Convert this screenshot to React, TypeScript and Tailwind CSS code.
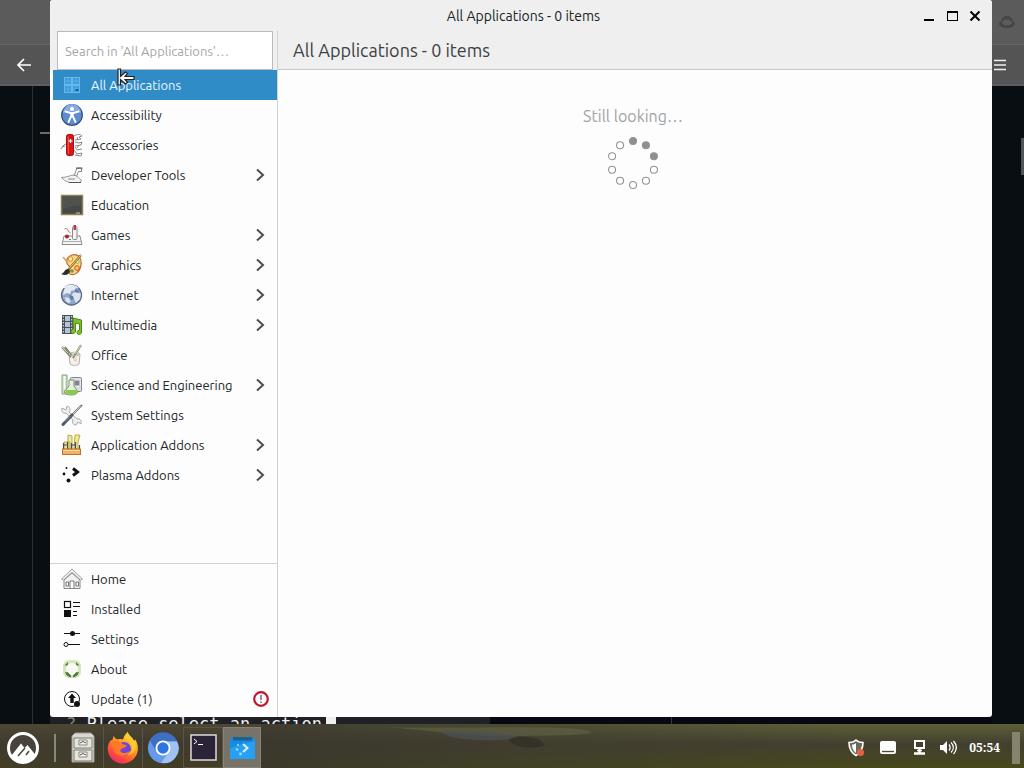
import type { ReactNode } from "react";

type Item = { label: string; icon: ReactNode; more?: boolean; alert?: boolean };

function Icon({ children }: { children: ReactNode }) {
  return (
    <svg viewBox="0 0 24 24" className="size-6 shrink-0" fill="none" aria-hidden="true">
      {children}
    </svg>
  );
}

const categories: Item[] = [
  {
    label: "All Applications",
    icon: (
      <Icon>
        <g stroke="#63b8ee" fill="#3f9cd8">
          <rect x="4.500" y="4.500" width="7" height="7" />
          <rect x="12.500" y="4.500" width="7" height="7" />
          <rect x="4.500" y="12.500" width="7" height="7" />
          <rect x="12.500" y="12.500" width="7" height="7" />
          <path d="M4 8h16M4 16h16M8 4v16M16 4v16" opacity=".6" />
        </g>
        <path d="M15.500 17h3" stroke="#175f92" strokeWidth="2" />
      </Icon>
    ),
  },
  {
    label: "Accessibility",
    icon: (
      <Icon>
        <circle cx="12" cy="12" r="10.300" fill="#5f8cce" stroke="#34547f" strokeWidth="1.300" />
        <path d="M3 10a9 9 0 0 1 18 0c-5-2-13-2-18 0z" fill="#86abe0" />
        <circle cx="12" cy="6" r="2" fill="#fff" />
        <path d="M5.500 8.500l5 1.500h3l5-1.500" stroke="#fff" strokeWidth="1.900" strokeLinecap="round" />
        <path d="M10.300 9.500h3.400v5h-3.400z" fill="#fff" />
        <path d="M11 13.500L8.500 19M13 13.500l2.500 5.500" stroke="#fff" strokeWidth="1.900" strokeLinecap="round" />
      </Icon>
    ),
  },
  {
    label: "Accessories",
    icon: (
      <Icon>
        <path d="M6 11c-3 1-4 3-5 5M5 13l-3 1M14 3c3-2 7-2 8 0l-3 1 2 2-6 1M15 9l4 1 3-1-1 3-6 1M15 14l2 3 5-1M14 17l3 4 5-1-1 3-6-1M17 4l1 3M19 12l-2 3" stroke="#8a8a8a" strokeWidth="1" />
        <rect x="6.500" y="1.500" width="7" height="21" rx="2" fill="#dc1515" stroke="#a80c0c" />
        <path d="M8.300 3.500v17" stroke="#f25252" strokeWidth="1.200" />
        <path d="M10.500 6v4M8.500 8h4" stroke="#fff" strokeWidth="1.200" />
      </Icon>
    ),
  },
  {
    label: "Developer Tools",
    icon: (
      <Icon>
        <path d="M1.500 14.500c5 0 8-2 12-2.500 4 0 5 4 8 5l-1 2.500h-11c-4-1-6-3-8-5z" fill="#f3f3f3" stroke="#999" />
        <path d="M14 13l3-8h4.500v3.500H18.500l-2 5M8 16h7" stroke="#888" />
        <path d="M16 4.500h6.500v1.500H16z" fill="#777" />
        <path d="M9 19.500h12" stroke="#555" />
      </Icon>
    ),
  },
  {
    label: "Education",
    icon: (
      <Icon>
        <rect x="1.500" y="2.500" width="21" height="19" fill="#474846" stroke="#8e8052" strokeWidth="1.500" />
        <path d="M3 4h18v9C13 11 9 15 3 16z" fill="#50524f" />
        <path d="M16 20h4" stroke="#cfc498" strokeWidth="1.200" />
      </Icon>
    ),
  },
  {
    label: "Games",
    icon: (
      <Icon>
        <path d="M4 13h16l2 8.500H2z" fill="#f5f5f3" stroke="#8a8a8a" />
        <path d="M2.500 18.500h19" stroke="#aaa" />
        <rect x="12.500" y="3.500" width="4.500" height="13" rx="1" fill="#f4f4f4" stroke="#8a8a8a" />
        <path d="M13.500 2h2.500v5h-2.500z" fill="#b53c4a" />
        <path d="M4.500 6c4-2 3 3 6 4" stroke="#b56a6a" />
        <circle cx="7" cy="13.500" r="2" fill="#a72335" />
        <path d="M9 16.500h2" stroke="#777" />
      </Icon>
    ),
  },
  {
    label: "Graphics",
    icon: (
      <Icon>
        <path d="M12 2c6-2 10 3 9 10-1 7-6 11-11 9-3-2 2-6-1-8-4-3-3-9 3-11z" fill="#f4d884" stroke="#c0672a" strokeWidth="1.200" />
        <circle cx="10.500" cy="6" r="2.300" fill="#fff2b6" stroke="#e58121" />
        <circle cx="17.500" cy="8.500" r="1.800" fill="#f7f3a0" stroke="#a4b53a" />
        <circle cx="17" cy="15" r="2.300" fill="#f5d25d" stroke="#db462b" />
        <circle cx="12" cy="18" r="1.800" fill="#76933a" />
        <path d="M21 2L8 17" stroke="#8c5c2c" strokeWidth="2" />
        <path d="M21 2L9 15.500" stroke="#f8ca89" />
        <path d="M8 16c-4 0-3 4-7 5 4 2 8 1 9-3z" fill="#2d2d2d" />
        <path d="M3 4l5 6" stroke="#d9a065" strokeWidth="1.500" />
      </Icon>
    ),
  },
  {
    label: "Internet",
    icon: (
      <Icon>
        <circle cx="11.500" cy="12" r="10" fill="#8fa6ca" stroke="#56698a" strokeWidth="1.300" />
        <path d="M4 7c3-5 8-6 12-3l-1 3-4 1-1 3-3-1-4 2z" fill="#e4eaf3" />
        <path d="M13 10l4-1 4 2-1 5-4 4-2-4-3-2zM5 14l4 1 2 4-3 1c-2-1-3-3-3-6z" fill="#dce4ee" />
        <path d="M9 12l4 1 1 3-3 1zM15 6l3 1 1 3-4-1z" fill="#5e7ba6" />
        <path d="M4 5c3-3 10-4 14 0" stroke="#f6f9fc" strokeWidth="1.200" />
      </Icon>
    ),
  },
  {
    label: "Multimedia",
    icon: (
      <Icon>
        <path d="M2 2h11v19H2z" fill="#45505c" />
        <path d="M5 3h5v5H5zM5 9h5v5H5zM5 15h5v5H5z" fill="#b4c4d4" />
        <path d="M3.300 3v17M11.700 3v17" stroke="#e8ecef" strokeDasharray="1.500 1.500" />
        <path d="M13 5l8.500 2v13c-2 3-6 1-4-2l2-1V11l-4-1v9c-2 3-6 1-4-2l2-1z" fill="#7cc12c" stroke="#4c8a14" />
      </Icon>
    ),
  },
  {
    label: "Office",
    icon: (
      <Icon>
        <path d="M9 11h11l-1 10c-3 2-6 2-9 0z" fill="#f4f2ec" stroke="#b5b0a4" />
        <path d="M2 4l9 10M5 4l7 9M21 2l-8 13" stroke="#7c8a68" strokeWidth="2" />
        <path d="M2 4l6 6M21 2l-6 9" stroke="#ded5a5" strokeWidth="1" />
        <ellipse cx="14.500" cy="11" rx="5.500" ry="1.800" stroke="#bbb" />
        <path d="M13 15l2 3M16 14v5" stroke="#e6b9a8" />
      </Icon>
    ),
  },
  {
    label: "Science and Engineering",
    icon: (
      <Icon>
        <path d="M2 2h5v19H2z" fill="#cfe3ca" stroke="#86a37c" />
        <rect x="10.500" y="4.500" width="11" height="14" rx="1" fill="#dcdce0" stroke="#858894" />
        <rect x="14" y="7" width="6" height="6" fill="#85809c" stroke="#eee" />
        <path d="M9 7h5v6l4 6c-2 4-12 4-14 0l5-6z" fill="#e4f2dc" stroke="#78966c" />
        <path d="M6.500 17h9.500l2 2.500c-3 3-9 3-13 0z" fill="#8bc94a" />
        <path d="M4.500 3v13" stroke="#fff" strokeWidth="1.500" />
      </Icon>
    ),
  },
  {
    label: "System Settings",
    icon: (
      <Icon>
        <path d="M2 5l4 2 1-4c3 1 4 4 2 6l8 7c3-1 5 2 4 5l-3-2-2 3c-3 0-4-2-3-5L6 10C3 11 1 8 2 5z" fill="#efefef" stroke="#aaa" />
        <path d="M22 2L10 14" stroke="#777" strokeWidth="2" />
        <path d="M21 3l-10 10" stroke="#ddd" strokeWidth=".8" />
        <path d="M12 12L3 21.500" stroke="#4f5a64" strokeWidth="3" strokeLinecap="round" />
        <path d="M10 13.500l-5 5" stroke="#93a0ad" />
      </Icon>
    ),
  },
  {
    label: "Application Addons",
    icon: (
      <Icon>
        <path d="M4 9h6v7H4zM8 2l4 1v13H8zM15 2h5l-2 7v7h-4z" fill="#f0ea9a" stroke="#b5ab45" />
        <path d="M3.500 10v6M7.500 9v7M11.500 10v6M15.500 9v7M19.500 12v4" stroke="#51465e" strokeWidth="1.200" />
        <path d="M4 12h4M11 12h4" stroke="#51465e" />
        <rect x="2.500" y="16" width="18" height="5.500" fill="#f0b266" stroke="#bd7427" />
        <path d="M3.500 17.500h16" stroke="#ffd9a0" />
      </Icon>
    ),
  },
  {
    label: "Plasma Addons",
    icon: (
      <Icon>
        <path d="M13 5.500l4.500 3.500-4.500 3.500" stroke="#111" strokeWidth="3" />
        <circle cx="6.500" cy="5" r="1" fill="#111" />
        <circle cx="4" cy="11" r="1.400" fill="#111" />
        <circle cx="8.500" cy="17.500" r="2" fill="#111" />
      </Icon>
    ),
  },
];

const actions: Item[] = [
  {
    label: "Home",
    icon: (
      <Icon>
        <path d="M1.500 12L12 2l10.500 10-2 1L12 5.500 3.500 13z" fill="#eee" stroke="#a0a0a0" />
        <path d="M4 13v8.500h16V13l-8-7z" fill="#f1f1f1" stroke="#888" />
        <path d="M10 21v-7h4v7M6 15h2.500v4H6zM16 15h2.500v4H16z" fill="#fff" stroke="#777" />
      </Icon>
    ),
  },
  {
    label: "Installed",
    icon: (
      <Icon>
        <rect x="4.500" y="4.500" width="6" height="6" stroke="#111" strokeWidth="1.200" />
        <path d="M4 13h7v7H4z" fill="#111" />
        <path d="M13 5.500h7M13 9.500h7M13 14.500h4M13 18.500h4" stroke="#111" />
      </Icon>
    ),
  },
  {
    label: "Settings",
    icon: (
      <Icon>
        <path d="M4 6.500h16M8 17.500h12" stroke="#111" strokeWidth="1.200" />
        <circle cx="12.500" cy="6.500" r="2.500" fill="#111" />
        <circle cx="6" cy="17.500" r="2" stroke="#111" />
      </Icon>
    ),
  },
  {
    label: "About",
    icon: (
      <Icon>
        <rect x="3" y="3" width="18" height="18" rx="6" fill="#d5e6ba" />
        <circle cx="12" cy="12" r="6" fill="#f8fbf4" />
        <path d="M4.500 8.500L8 5v2.500L7 8.500zM19.500 8.500L16 5v2.500l1 1zM5 15.500l2.500-.5 3.500 3.500v2C8 20 6 18 5 15.500zM19 15.500l-2.500-.5-3.500 3.500v2c3-.5 5-2.500 6-5z" fill="#4f7740" />
      </Icon>
    ),
  },
  {
    label: "Update (1)",
    icon: (
      <Icon>
        <circle cx="12" cy="12" r="7.500" stroke="#111" />
        <path d="M12 6.500l4 4.500h-2.300v5h-3.400v-5H8z" fill="#111" />
        <circle cx="17" cy="17" r="3" fill="#111" />
      </Icon>
    ),
    alert: true,
  },
];

function Row({ item, active }: { item: Item; active?: boolean }) {
  return (
    <li>
      <button
        type="button"
        className={
          active
            ? "flex h-[30px] w-full items-center gap-[7px] bg-[#308cc6] pl-[7px] pr-2 text-left text-[#eef7fd]"
            : "flex h-[30px] w-full items-center gap-[7px] pl-[7px] pr-2 text-left text-[#232629]"
        }
      >
        {item.icon}
        <span className="flex-1 whitespace-nowrap">{item.label}</span>
        {item.more && (
          <svg viewBox="0 0 18 18" className="size-[18px]" fill="none" aria-hidden="true">
            <path d="M6 3.500L12 9l-6 5.500" stroke="#4b4d4f" strokeWidth="2" />
          </svg>
        )}
        {item.alert && (
          <svg viewBox="0 0 16 16" className="size-4" fill="none" aria-hidden="true">
            <circle cx="8" cy="8" r="6.800" stroke="#c01530" strokeWidth="2.200" />
            <path d="M8 4v5M8 10.500v1.500" stroke="#666" strokeWidth="1.400" />
          </svg>
        )}
      </button>
    </li>
  );
}

const expandable = ["Developer Tools", "Games", "Graphics", "Internet", "Multimedia", "Science and Engineering", "Application Addons", "Plasma Addons"];

const dots = Array.from({ length: 10 }, (_, i) => {
  const a = (i * Math.PI) / 5;
  return { x: 27 + 22 * Math.sin(a), y: 27 - 22 * Math.cos(a), on: i < 3 };
});

function AppWindow() {
  return (
    <main className="absolute top-0 right-8 bottom-[51px] left-[50px] flex flex-col overflow-hidden rounded-[3px] bg-[#fdfdfd]">
      <header className="flex h-[31px] shrink-0 items-center gap-px bg-[#efefef] pr-[6px] text-[#202224]">
        <h1 className="flex-1 pl-20 text-center text-sm leading-5">All Applications - 0 items</h1>
        <button type="button" aria-label="Minimize" className="p-1">
          <svg viewBox="0 0 14 14" className="size-3.5" aria-hidden="true"><path d="M2 10h10v2H2z" fill="#000" /></svg>
        </button>
        <button type="button" aria-label="Maximize" className="p-1">
          <svg viewBox="0 0 14 14" className="size-3.5" aria-hidden="true"><path d="M2 2h11v10H2zM3 4v7h9V4z" fill="#000" fillRule="evenodd" /></svg>
        </button>
        <button type="button" aria-label="Close" className="p-1">
          <svg viewBox="0 0 14 14" className="size-3.5" aria-hidden="true"><path d="M2.500 2.500l9 9M11.500 2.500l-9 9" stroke="#000" strokeWidth="2" /></svg>
        </button>
      </header>
      <div className="flex min-h-0 flex-1">
        <aside className="flex w-[228px] shrink-0 flex-col border-r border-[#d0d1d2] text-[13px] leading-5">
          <div className="bg-[#efefef] pr-1 pl-[7px]">
            <input
              type="search"
              aria-label="Search in All Applications"
              placeholder="Search in 'All Applications'…"
              className="block h-[39px] w-full border border-[#b8babc] bg-white px-[7px] text-[13px] outline-none placeholder:text-[#a4a6a8]"
            />
          </div>
          <nav aria-label="Categories" className="flex-1 pl-[3px]">
            <ul>
              {categories.map((c, i) => (
                <Row key={c.label} item={{ ...c, more: expandable.includes(c.label) }} active={i === 0} />
              ))}
            </ul>
          </nav>
          <nav aria-label="Actions" className="border-t border-[#d0d1d2] pb-[3px] pl-[3px]">
            <ul>
              {actions.map((a) => (
                <Row key={a.label} item={a} />
              ))}
            </ul>
          </nav>
        </aside>
        <section className="flex flex-1 flex-col">
          <h2 className="flex h-[39px] items-center border-b border-[#c6c8ca] bg-[#efefef] px-[15px] text-lg text-[#3c4043]">
            All Applications - 0 items
          </h2>
          <div className="flex flex-col items-center gap-2 pt-[34px] pr-1">
            <p className="text-base leading-6 text-[#a1a3a4]">Still looking…</p>
            <svg viewBox="0 0 54 54" className="size-[54px]" aria-hidden="true">
              {dots.map((d, i) => (
                <circle key={i} cx={d.x} cy={d.y} r="3.500" fill={d.on ? "#8f8f8f" : "#fff"} stroke="#949494" strokeWidth="1.100" />
              ))}
            </svg>
          </div>
        </section>
      </div>
    </main>
  );
}

function Taskbar() {
  return (
    <footer className="relative flex h-11 shrink-0 items-center justify-between bg-linear-to-b from-[#5e6038] via-[#433f2f] via-45% to-[#47491a] text-white">
      <div className="flex h-full items-center bg-[#40372f]/60 pt-[3px]">
        <button type="button" aria-label="Application menu" className="flex h-full w-[46px] items-center justify-center">
          <svg viewBox="0 0 34 34" className="size-[34px]" aria-hidden="true">
            <circle cx="17" cy="17" r="14.500" fill="#4a433b" stroke="#fff" strokeWidth="3" />
            <path d="M5 25L15 12.500l3.500 4.500 3-3 8 10a14 14 0 0 1-24.500 1z" fill="#fff" />
            <path d="M12 25l7-8M20 24l3-4" stroke="#4a433b" strokeWidth="1.500" />
          </svg>
        </button>
        <span className="mr-[7px] ml-2 h-7 w-[2px] bg-[#8b867c]" />
        <button type="button" aria-label="Files" className="flex h-full w-10 items-center justify-center">
          <svg viewBox="0 0 24 32" className="h-8 w-6" aria-hidden="true">
            <path d="M1 4l3-3h16l3 3v26H1z" fill="#d8d8cf" stroke="#9b9b92" />
            <path d="M3 6h18v10H3zM3 18h18v11H3z" fill="#e6e6dd" stroke="#7c7c74" />
            <path d="M8 8h8v5H8zM8 20h8v5H8z" fill="#f6f6f0" stroke="#88887f" />
            <path d="M9 11l3-1.500 3 1.500M9 23l3-1.500 3 1.500" stroke="#555" fill="none" />
          </svg>
        </button>
        <button type="button" aria-label="Firefox" className="flex h-full w-10 items-center justify-center border-x border-[#5a5348]">
          <svg viewBox="0 0 34 34" className="size-8 shrink-0" aria-hidden="true">
            <defs>
              <linearGradient id="fox" x1="0.800" y1="0" x2="0.200" y2="1">
                <stop offset="0" stopColor="#fff04b" />
                <stop offset=".4" stopColor="#ff9a20" />
                <stop offset=".75" stopColor="#ff473f" />
                <stop offset="1" stopColor="#e42676" />
              </linearGradient>
            </defs>
            <path d="M7 4c1 2 2 3 4 4 3-1 5 0 6 0 1-4 3-6 5-8 1 5 5 6 6 10l2-2c3 5 4 11 1 17-6 11-23 12-29-1C-1 17 2 9 6 8z" fill="url(#fox)" />
            <circle cx="18" cy="18" r="7.500" fill="#7045db" />
            <path d="M5 10c4-1 9 0 12 3l4 1c-1 3-5 3-6 4-2 3 1 5 5 4 3 0 4-2 6-2-2 6-14 8-18 1-2-4-3-8-3-11z" fill="#ff7827" />
            <path d="M22 0c-3 5-2 8 2 11 5 5 2 12-3 14 9-1 12-10 7-17-1-3-5-4-6-8z" fill="#ffc930" />
          </svg>
        </button>
        <button type="button" aria-label="Chromium" className="flex h-full w-10 items-center justify-center">
          <svg viewBox="0 0 34 34" className="size-8" aria-hidden="true">
            <circle cx="17" cy="17" r="16" fill="#669ae9" />
            <path d="M3 9a16 16 0 0 1 29 1H17a8 8 0 0 0-7 11z" fill="#3d70c4" />
            <path d="M17 10h15a16 16 0 0 1-17 23l8-12z" fill="#9fc1f4" />
            <circle cx="17" cy="17" r="8" fill="#fff" />
            <circle cx="17" cy="17" r="6" fill="#2e74e3" />
          </svg>
        </button>
        <button type="button" aria-label="Terminal" className="flex h-full w-10 items-center justify-center border border-[#5a5348]">
          <svg viewBox="0 0 27 27" className="size-[27px]" aria-hidden="true">
            <rect x="1" y="1" width="25" height="25" fill="#2b2438" stroke="#dddbd9" strokeWidth="1.500" />
            <path d="M4 5l3 2.500L4 10M8 10.500h5" stroke="#fff" fill="none" />
          </svg>
        </button>
        <button type="button" aria-label="Discover" className="flex h-full w-[38px] items-center justify-center border border-[#888379] bg-[#777369]">
          <svg viewBox="0 0 27 27" className="size-[27px]" aria-hidden="true">
            <path d="M1 4h25v21H1z" fill="#168ce8" />
            <path d="M1 14l25-7v18H1z" fill="#26a0f5" />
            <path d="M4 3h19v3.500H4z" fill="#1b6193" />
            <path d="M14 10l4.500 4-4.500 4" stroke="#d8f1ff" strokeWidth="2" fill="none" />
            <circle cx="9" cy="11" r="1" fill="#a5dcff" />
            <circle cx="8" cy="15.500" r="1.200" fill="#a5dcff" />
            <circle cx="11.500" cy="20" r="1.400" fill="#a5dcff" />
          </svg>
        </button>
      </div>
      <div className="h-full min-w-0 flex-1 bg-linear-to-r from-[#39352e]/80 via-[#3d3b2e]/50 to-transparent">
        <svg viewBox="0 0 580 44" preserveAspectRatio="none" className="size-full" aria-hidden="true">
          <path d="M120 3c60 2 170-2 200 3 30 5-40 6-80 6-40 0-70-6-120-9z" fill="#67694c" opacity=".5" />
          <path d="M178 7c30 0 60 2 75 5 8 3-20 5-40 4s-35-5-35-9z" fill="#4d5055" opacity=".7" />
          <path d="M245 16c8-6 18-3 30-1l6 6c-12 5-30 3-36-5z" fill="#2f2d27" opacity=".7" />
        </svg>
      </div>
      <div className="flex h-full items-center gap-3 pt-1">
        <button type="button" aria-label="Security status">
          <svg viewBox="0 0 18 18" className="size-[18px]" aria-hidden="true">
            <path d="M9 1c2 2 4 2.500 7 2.500 0 6-2 10-7 13-5-3-7-7-7-13C5 3.500 7 3 9 1z" fill="#6d6a5b" stroke="#fff" strokeWidth="1.600" />
            <path d="M9 4v10c-3-2-4-5-4-8.500 1.500 0 3-.5 4-1.500z" fill="#fff" />
            <circle cx="13.500" cy="13.500" r="3.500" fill="#e0643f" />
          </svg>
        </button>
        <button type="button" aria-label="Notifications" className="px-[2px]">
          <svg viewBox="0 0 18 18" className="size-[18px]" aria-hidden="true">
            <rect x="1" y="2" width="16" height="13" rx="2" fill="#fff" />
            <path d="M3 12.500h12" stroke="#514c39" strokeWidth="1.400" />
          </svg>
        </button>
        <button type="button" aria-label="Network">
          <svg viewBox="0 0 16 18" className="h-[18px] w-4" fill="none" aria-hidden="true">
            <rect x="4" y="2" width="9" height="7" stroke="#fff" strokeWidth="2" />
            <path d="M8.500 9v6M3 14.500h11" stroke="#fff" strokeWidth="2.400" />
            <path d="M6 11.500h5" stroke="#fff" strokeWidth="1.500" />
          </svg>
        </button>
        <button type="button" aria-label="Volume">
          <svg viewBox="0 0 18 18" className="size-[18px]" fill="none" aria-hidden="true">
            <path d="M1 6h3l4-4v13l-4-4H1z" fill="#fff" />
            <path d="M10 5.500c1.500 2 1.500 4 0 6M12 3.500c3 3 3 7 0 10M14.500 2c3.500 4 3.500 9 0 13" stroke="#fff" strokeWidth="1.300" />
          </svg>
        </button>
        <time className="font-['Noto_Serif','DejaVu_Serif',serif] text-xs font-bold">05:54</time>
        <button type="button" aria-label="Show desktop" className="mr-1 h-8 w-2 bg-[#85836b]" />
      </div>
    </footer>
  );
}

export default function App() {
  return (
    <div className="relative flex h-screen min-h-[600px] flex-col overflow-hidden bg-[#080e11] font-['Ubuntu','Noto_Sans',sans-serif]">
      <div className="shrink-0 bg-[#5b5b5b]">
        <div className="flex h-[45px] items-center justify-end border-b border-[#666] pr-2">
          <svg viewBox="0 0 18 16" className="h-4 w-[18px]" aria-hidden="true">
            <path d="M3 7c2-7 10-7 12 0l2 2c0 4-4 5-8 5s-8-1-8-5z" fill="#464646" />
            <ellipse cx="9" cy="8.500" rx="5" ry="3" fill="#5c5c5c" />
          </svg>
        </div>
        <div className="flex h-[41px] items-center justify-between border-b-2 border-[#5d5d62] bg-[#545454] pr-[17px] pl-4">
          <button type="button" aria-label="Back">
            <svg viewBox="0 0 16 16" className="size-4" aria-hidden="true"><path d="M15 8H2M8 2L2 8l6 6" stroke="#fff" strokeWidth="1.700" fill="none" /></svg>
          </button>
          <button type="button" aria-label="Menu">
            <svg viewBox="0 0 14 14" className="size-3.5" aria-hidden="true"><path d="M1 2.500h12M1 7h12M1 11.500h12" stroke="#eee" strokeWidth="1.400" /></svg>
          </button>
        </div>
      </div>
      <div className="flex min-h-0 flex-1">
        <div className="w-[33px] border-r border-[#2b3135]" />
        <div className="w-[17px] pt-[46px] pl-[7px]">
          <div className="h-[2px] bg-[#746769]" />
        </div>
        <div className="flex flex-1 flex-col justify-end">
          <div className="flex h-[10px] bg-[#070910]">
            <p className="flex h-[10px] w-[440px] gap-1 bg-[#202126] pl-4 font-['DejaVu_Sans_Mono',monospace] text-[17px] leading-5 whitespace-pre text-[#eee]">
              <span><span className="text-[#887f71]">?</span> Please select an action</span>
              <span className="h-full w-[10px] bg-[#eee]" />
            </p>
            <div className="w-[182px] border-r border-[#34383a]" />
          </div>
        </div>
        <div className="flex w-8 justify-end pt-[52px]">
          <div className="h-[37px] w-[3px] bg-[#4c565c]" />
        </div>
      </div>
      <Taskbar />
      <AppWindow />
      <svg viewBox="0 0 20 22" className="pointer-events-none absolute top-[67px] left-[116px] h-[22px] w-5" aria-hidden="true">
        <path d="M2 2h2.500v7.500L9.500 5l2 1.500L9 9.500h9v3H9l2.500 3-2 1.500-5-4.500V18H2z" fill="#fff" stroke="#222" strokeWidth="1.200" />
      </svg>
    </div>
  );
}
